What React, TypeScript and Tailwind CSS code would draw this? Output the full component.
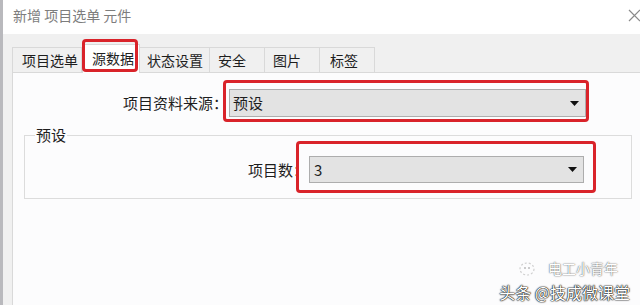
import React from "react";

const Arrow = () => (
  <svg width="9" height="5" viewBox="0 0 9 5" className="block">
    <path d="M0 0 H9 L4.5 5 Z" fill="#111" />
  </svg>
);

const RedBox = ({ cls }: { cls: string }) => (
  <div className={`absolute border-[3px] border-[#d9232a] rounded-[4px] pointer-events-none ${cls}`} />
);

export default function App() {
  const tabs = [
    { t: "项目选单", w: "w-[70px]", pl: "pl-[9px]" },
    { t: "源数据", w: "w-[58px]", pl: "pl-[9px]", sel: true },
    { t: "状态设置", w: "w-[70px]", pl: "pl-[7px]" },
    { t: "安全", w: "w-[55px]", pl: "pl-[8px]" },
    { t: "图片", w: "w-[55px]", pl: "pl-[8px]" },
    { t: "标签", w: "w-[55px]", pl: "pl-[10px]" },
  ];
  return (
    <div className="w-[640px] h-[305px] overflow-hidden flex bg-[#f0f0f0] relative text-[#1e1e1e] font-['Noto_Sans_CJK_SC','Noto_Sans',sans-serif]">
      <div className="w-[3px] bg-[#b9b9bd]" />
      <div className="flex-1 flex flex-col min-w-0">
        {/* title bar */}
        <div className="h-[34px] bg-white flex items-center justify-between pl-[10px] pb-[4px] shrink-0">
          <span className="text-[14px] leading-[20px] text-[#7d7d7d]">新增 项目选单 元件</span>
          <svg width="13" height="13" viewBox="0 0 13 13" className="mr-[-1px]">
            <path d="M1 1 L12 12 M12 1 L1 12" stroke="#8a8a8a" strokeWidth="1.2" fill="none" />
          </svg>
        </div>
        {/* tabs */}
        <div className="h-[38px] flex items-end pl-[9px] shrink-0 relative z-10">
          {tabs.map((tab) =>
            tab.sel ? (
              <div
                key={tab.t}
                className={`${tab.w} h-[29px] mb-[-1px] relative bg-white border border-b-0 border-[#d9d9d9] ${tab.pl} text-[14px] leading-[24px] pt-[1px]`}
              >
                {tab.t}
                <RedBox cls="left-[-1px] right-[1px] top-[-6px] bottom-[1px]" />
              </div>
            ) : (
              <div
                key={tab.t}
                className={`${tab.w} h-[25px] bg-[#f0f0f0] border border-b-0 border-l-0 first:border-l border-[#d9d9d9] ${tab.pl} text-[14px] leading-[24px]`}
              >
                {tab.t}
              </div>
            )
          )}
        </div>
        {/* panel */}
        <div className="flex-1 ml-[9px] bg-[#fcfcfd] border-l border-t border-[#d9d9d9] mr-[-20px]">
          <div className="flex items-center mt-[16px]">
            <div className="w-[215px] text-right text-[15px] leading-[20px]">项目资料来源：</div>
            <div className="relative ml-[1px]">
              <div className="w-[357px] h-[28px] bg-[#e3e3e3] border border-[#adadad] flex items-center justify-between pl-[3px] pr-[6px] text-[15px] leading-[20px]">
                <span>预设</span>
                <Arrow />
              </div>
              <RedBox cls="left-[-6px] right-[-3px] top-[-9px] bottom-[-5px]" />
            </div>
          </div>
          <fieldset className="ml-[11px] mt-[10px] w-[608px] border border-[#dcdcdc] px-[10px] pb-[15px]">
            <legend className="text-[15px] leading-[16px] px-[1px]">预设</legend>
            <div className="flex items-center mt-[13px] ml-[-10px]">
              <div className="w-[283px] text-right text-[15px] leading-[20px]">项目数：</div>
              <div className="relative ml-[1px]">
                <div className="w-[275px] h-[27px] bg-[#e3e3e3] border border-[#adadad] flex items-center justify-between pl-[4px] pr-[6px] text-[15px] leading-[20px]">
                  <span>3</span>
                  <Arrow />
                </div>
                <RedBox cls="left-[-13px] right-[-12px] top-[-15px] bottom-[-10px]" />
              </div>
            </div>
          </fieldset>
        </div>
      </div>
      {/* watermark */}
      <div className="absolute right-[10px] bottom-[1px] flex flex-col items-end">
        <div className="flex items-center gap-[8px] mr-[12px] mb-[1px]">
          <svg width="22" height="16" viewBox="0 0 22 16">
            <ellipse cx="9" cy="8" rx="7" ry="6" fill="none" stroke="#cfcfcf" strokeWidth="1.2" strokeDasharray="2 2" />
            <circle cx="7" cy="7" r="1" fill="#bbb" />
            <circle cx="11" cy="7" r="1" fill="#bbb" />
          </svg>
          <span className="text-[14px] leading-normal text-white [text-shadow:0_0_1px_#555,0_0_2px_#888]">电工小青年</span>
        </div>
        <span className="text-[16px] leading-normal text-white [text-shadow:0_0_1px_#000,0_0_1px_#000,0_0_2px_#333]">头条 @技成微课堂</span>
      </div>
    </div>
  );
}
